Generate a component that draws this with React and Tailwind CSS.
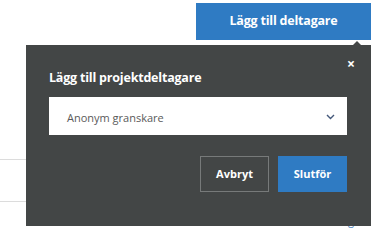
import React from 'react';

// Popover för att lägga till projektdeltagare
const App = () => {
  return (
    <div className="relative w-[384px] h-[240px] bg-white overflow-hidden" style={{ fontFamily: '"Open Sans", sans-serif' }}>
      {/* Bakgrund: knapp och tabellrader */}
      <div className="flex justify-end pt-[3px] pr-[13px]">
        <button className="w-[175px] h-[37px] bg-[#2f7bc3] text-white text-[12.5px] font-bold tracking-[-0.2px]">
          Lägg till deltagare
        </button>
      </div>
      <div className="mt-[119px] w-[26px] border-t border-[#dcdcdc]" />
      <div className="mt-[41px] w-[26px] border-t border-[#dcdcdc]" />
      <div className="flex gap-[28px] pl-[193px] mt-[13px] text-[11px] leading-none">
        <span className="text-[#9a9a9a]">Namn</span>
        <span className="text-[#9a9a9a]">Moderator</span>
        <span className="text-[#4a7fc0]">Tog</span>
      </div>

      {/* Popover */}
      <div className="absolute left-[26px] top-[45px] w-[345px] h-[181px] bg-[#434646]">
        <div className="absolute -top-[4px] left-[327px] w-0 h-0 border-l-[4px] border-r-[4px] border-b-[4px] border-l-transparent border-r-transparent border-b-[#434646]" />
        <button className="absolute right-[16px] top-[12px] text-white text-[14px] font-bold leading-none">×</button>
        <div className="pl-[23px] pr-[24px] pt-[25px]">
          <h3 className="text-white text-[12.5px] font-bold tracking-[-0.2px] leading-[16px]">Lägg till projektdeltagare</h3>
          <div className="mt-[11px] h-[38px] bg-white flex items-center justify-between pl-[18px] pr-[12px]">
            <span className="text-[#5a5a5a] text-[11px] mt-[5px]">Anonym granskare</span>
            <svg width="9" height="6" viewBox="0 0 9 6" className="mt-[2px]">
              <path d="M1 1l3.5 3.5L8 1" fill="none" stroke="#44587a" strokeWidth="1.4" />
            </svg>
          </div>
          <div className="mt-[21px] flex justify-end gap-[9px]">
            <button className="w-[69px] h-[36px] border border-[#777a7a] text-white text-[11px] font-bold">
              Avbryt
            </button>
            <button className="w-[69px] h-[36px] bg-[#2f7bc3] text-white text-[11px] font-bold">
              Slutför
            </button>
          </div>
        </div>
      </div>
    </div>
  );
};

export default App;
